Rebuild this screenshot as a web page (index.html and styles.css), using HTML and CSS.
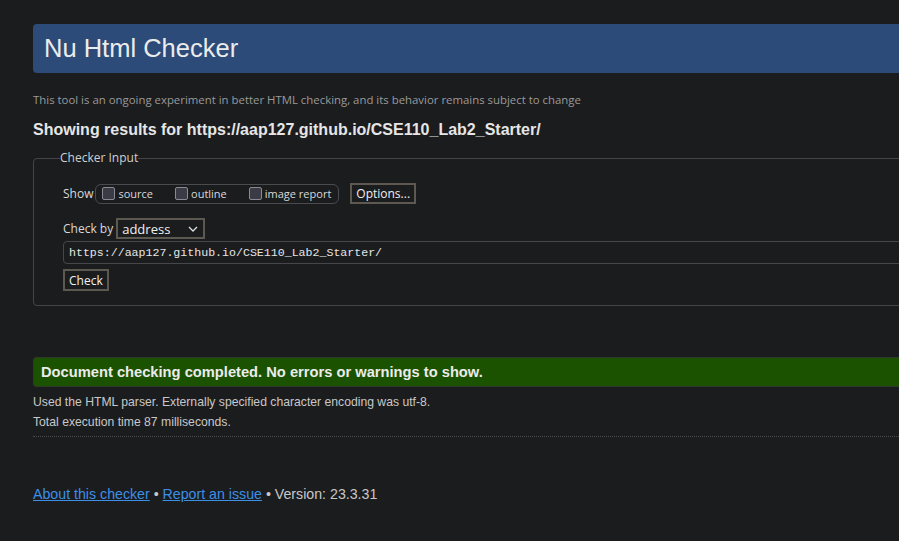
FILE: index.html
```html
<!DOCTYPE html>
<html>
<head>
<meta charset="utf-8">
<title>Nu Html Checker</title>
<link rel="stylesheet" href="styles.css">
</head>
<body>
<div class="page">
  <h1 class="banner">Nu Html Checker</h1>
  <p class="note">This tool is an ongoing experiment in better HTML checking, and its behavior remains subject to change</p>
  <h2 class="results">Showing results for https://aap127.github.io/CSE110_Lab2_Starter/</h2>
  <fieldset class="input-box">
    <legend class="legend">Checker Input</legend>
    <div class="row show-row">
      <span class="lbl">Show</span>
      <span class="group">
        <label class="opt"><span class="cb"></span>source</label>
        <label class="opt"><span class="cb"></span>outline</label>
        <label class="opt"><span class="cb"></span>image report</label>
      </span>
      <span class="btn options">Options...</span>
    </div>
    <div class="row by-row">
      <span class="lbl">Check by</span>
      <span class="select">address<svg class="chev" width="10" height="6" viewBox="0 0 10 6"><path d="M1 1 L5 5 L9 1" fill="none" stroke="#e0e0e0" stroke-width="1.3"/></svg></span>
    </div>
    <div class="url">https://aap127.github.io/CSE110_Lab2_Starter/</div>
    <span class="btn check">Check</span>
  </fieldset>
  <div class="success">Document checking completed. No errors or warnings to show.</div>
  <p class="info first">Used the HTML parser. Externally specified character encoding was utf-8.</p>
  <p class="info">Total execution time 87 milliseconds.</p>
  <div class="dots"></div>
  <p class="footer"><a href="#">About this checker</a> • <a href="#">Report an issue</a> • Version: 23.3.31</p>
</div>
</body>
</html>
```
FILE: styles.css
```css
html, body {
  margin: 0;
  padding: 0;
  background: #1b1c1e;
  overflow: hidden;
  height: 541px;
}
.page {
  margin-left: 33px;
  width: 1100px;
  padding-top: 24px;
  font-family: "Liberation Sans", Arial, sans-serif;
  color: #e0e0e0;
}
.banner {
  margin: 0;
  height: 49px;
  background: #2c4b79;
  border-radius: 4px 0 0 4px;
  font-weight: normal;
  font-size: 25.5px;
  line-height: 49px;
  padding-left: 11px;
  color: #ebebeb;
}
.note {
  margin: 19px 0 0 0;
  font-family: "Open Sans", "Noto Sans", sans-serif;
  font-size: 11.4px;
  line-height: 16px;
  color: #9a9a9a;
}
.results {
  margin: 13px 0 0 0;
  font-size: 16px;
  line-height: 18px;
  font-weight: bold;
  color: #e6e6e6;
}
.input-box {
  margin: 11px 0 0 0;
  border: 1px solid #444549;
  border-radius: 4px;
  padding: 9px 29px 14px 29px;
  font-family: "Open Sans", "Noto Sans", sans-serif;
  font-size: 12px;
}
.legend {
  padding: 0;
  margin-left: -3px;
  font-size: 12px;
  color: #d0d0d0;
  line-height: 16px;
}
.row {
  display: flex;
  align-items: center;
}
.show-row {
  margin-top: 8px;
  height: 21px;
}
.lbl {
  color: #d8d8d8;
  font-size: 12px;
}
.group {
  display: flex;
  align-items: center;
  border: 1px solid #4a4b4f;
  border-radius: 6px;
  height: 18px;
  margin-left: 2px;
  padding: 0 7px 0 6px;
  gap: 22px;
}
.opt {
  display: flex;
  align-items: center;
  font-size: 11px;
  color: #d8d8d8;
  gap: 3px;
}
.cb {
  width: 11px;
  height: 11px;
  border: 1px solid #8a8a96;
  border-radius: 2px;
  background: #3a3b44;
}
.btn {
  display: inline-flex;
  align-items: center;
  border: 2px solid #5d5850;
  background: #1b1c1e;
  color: #f0f0f0;
  font-size: 12px;
  padding: 0 4px;
  height: 17px;
}
.options {
  margin-left: 11px;
  padding: 0 4px;
}
.by-row {
  margin-top: 14px;
  height: 21px;
}
.select {
  display: inline-flex;
  align-items: center;
  justify-content: space-between;
  width: 76px;
  height: 17px;
  margin-left: 3px;
  border: 2px solid #5d5850;
  padding: 0 5px 0 4px;
  font-size: 13px;
  color: #f0f0f0;
}
.url {
  margin-top: 2px;
  height: 21px;
  border: 1px solid #46474b;
  border-radius: 4px;
  font-family: "Liberation Mono", "DejaVu Sans Mono", monospace;
  font-size: 11.6px;
  line-height: 21px;
  padding-left: 5px;
  color: #e6e6e6;
}
.check {
  margin-top: 5px;
  height: 18px;
  padding: 0 4px;
}
.success {
  margin-top: 51px;
  height: 28px;
  border: 1px solid #2f3a2a;
  border-radius: 3px;
  background: #1a5200;
  color: #ececec;
  font-weight: bold;
  font-size: 14.7px;
  line-height: 28px;
  padding-left: 7px;
}
.info {
  margin: 0;
  font-size: 12.2px;
  line-height: 20px;
  color: #c8c8c8;
}
.info.first {
  margin-top: 5px;
}
.dots {
  margin-top: 4px;
  border-top: 1px dotted #4a4a4a;
}
.footer {
  margin: 49px 0 0 0;
  font-size: 14.2px;
  color: #c8c8c8;
}
.footer a {
  color: #3d8fe6;
}
```
